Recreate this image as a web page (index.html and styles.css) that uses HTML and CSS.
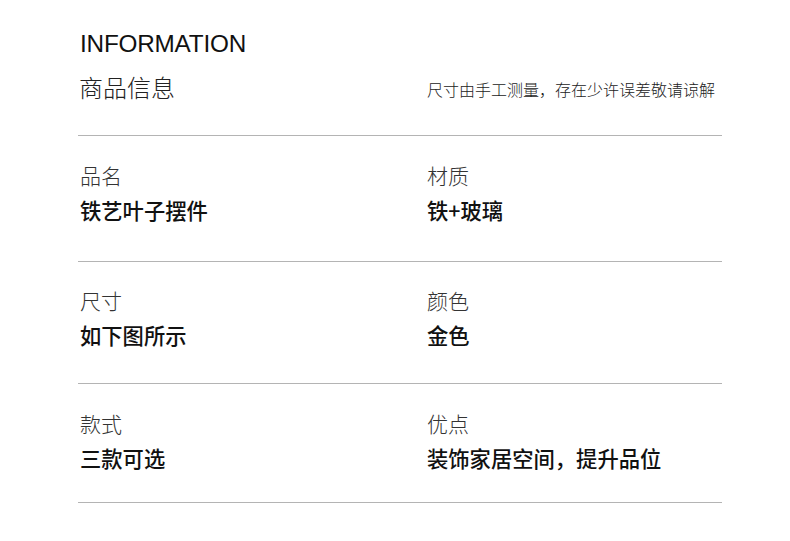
FILE: index.html
```html
<!DOCTYPE html>
<html lang="zh-CN">
<head>
<meta charset="utf-8">
<link rel="stylesheet" href="styles.css">
</head>
<body>
<div class="page">
  <header class="head">
    <div class="en">INFORMATION</div>
    <div class="head-row">
      <div class="col"><span class="zh-title">商品信息</span></div>
      <div class="col"><span class="note">尺寸由手工测量，存在少许误差敬请谅解</span></div>
    </div>
  </header>
  <div class="row r1">
    <div class="col"><div class="label">品名</div><div class="value">铁艺叶子摆件</div></div>
    <div class="col"><div class="label">材质</div><div class="value">铁+玻璃</div></div>
  </div>
  <div class="row r2">
    <div class="col"><div class="label">尺寸</div><div class="value">如下图所示</div></div>
    <div class="col"><div class="label">颜色</div><div class="value">金色</div></div>
  </div>
  <div class="row r3">
    <div class="col"><div class="label">款式</div><div class="value">三款可选</div></div>
    <div class="col"><div class="label">优点</div><div class="value">装饰家居空间，提升品位</div></div>
  </div>
</div>
</body>
</html>
```

FILE: styles.css
```css
html, body {
  margin: 0;
  padding: 0;
  background: #fff;
}
body {
  font-family: "Noto Sans CJK SC", "Noto Sans", sans-serif;
  color: #111;
}
.page {
  width: 644px;
  margin-left: 78px;
  padding-top: 29px;
}
.head {
  border-bottom: 1px solid #b4b4b4;
  padding-bottom: 31px;
}
.en {
  font-family: "Liberation Sans", Arial, sans-serif;
  font-size: 24.3px;
  line-height: 30px;
  letter-spacing: -0.2px;
  color: #111;
  padding-left: 2px;
}
.head-row {
  display: grid;
  grid-template-columns: 347px 1fr;
  align-items: start;
  height: 34px;
  margin-top: 11px;
}
.col {
  padding-left: 2px;
}
.zh-title {
  display: block;
  font-size: 24px;
  line-height: 34px;
  font-weight: 300;
  color: #222;
  margin-left: -1px;
}
.note {
  display: block;
  font-size: 16px;
  line-height: 20px;
  font-weight: 300;
  color: #222;
  padding-top: 9px;
}
.row {
  display: grid;
  grid-template-columns: 347px 1fr;
  border-bottom: 1px solid #b4b4b4;
}
.r1 { padding-top: 25px; height: 100px; }
.r2 { padding-top: 24px; height: 97px; }
.r3 { padding-top: 25px; height: 93px; }
.label {
  font-size: 21px;
  line-height: 28px;
  font-weight: 300;
  color: #333;
}
.value {
  font-size: 21.3px;
  line-height: 30px;
  font-weight: 500;
  color: #111;
  margin-top: 6px;
}
```
